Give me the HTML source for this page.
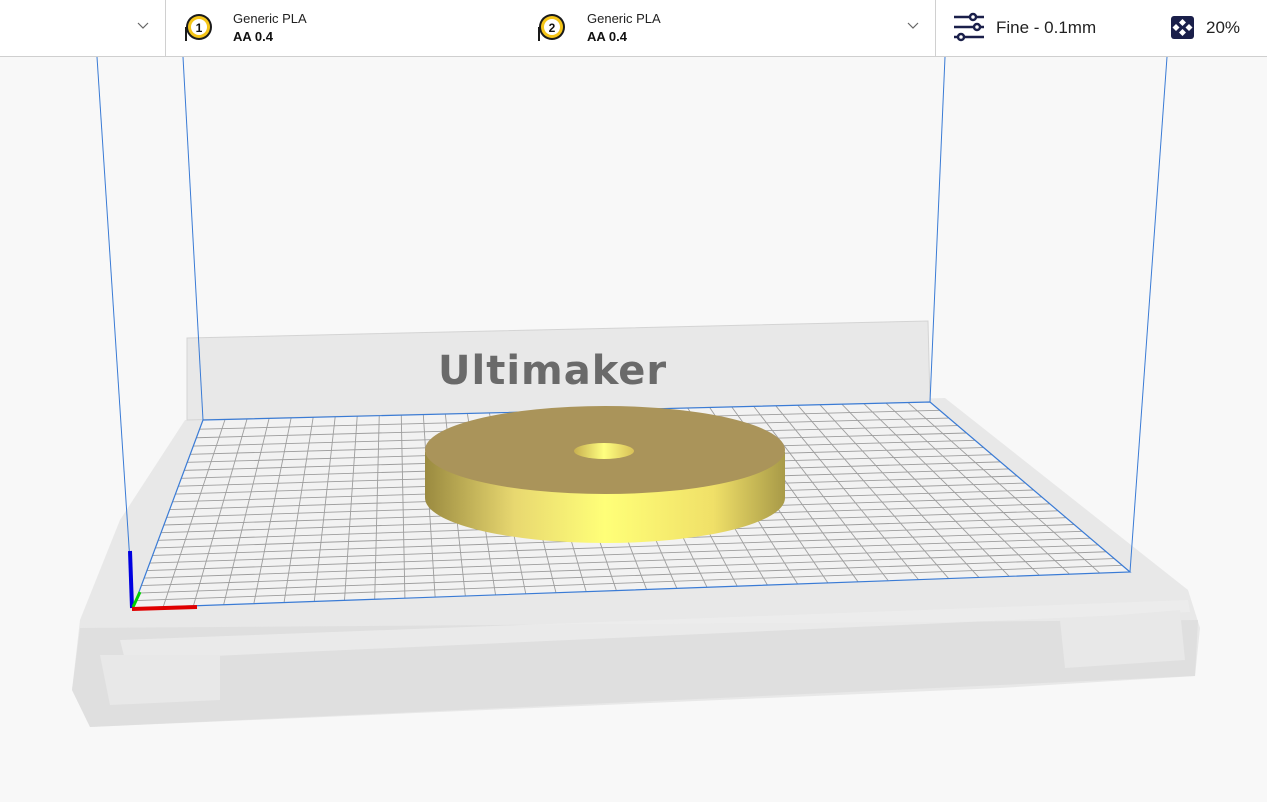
<!DOCTYPE html>
<html><head><meta charset="utf-8"><style>
html,body{margin:0;padding:0;width:1267px;height:802px;overflow:hidden;background:#f8f8f8;font-family:"Liberation Sans",sans-serif}
#top{position:absolute;left:0;top:0;width:1267px;height:56px;background:#fff;border-bottom:1px solid #cfcfcf;z-index:2}
.sep{position:absolute;top:0;width:1px;height:56px;background:#d0d0d0}
.t1{position:absolute;font-size:13px;color:#222}
.t2{position:absolute;font-size:13px;font-weight:bold;color:#111}
svg{position:absolute;left:0;top:0}
</style></head><body>
<svg width="1267" height="802" id="scene">
<polygon points="185,420 945,398 1188,590 1200,628 1195,676 1000,688 90,727 72,690 80,620 120,520" fill="#e4e4e4" opacity="0.8"/>
<polygon points="80,628 1198,620 1195,676 90,727 72,690" fill="#dcdcdc" opacity="0.7"/>
<polygon points="120,640 1188,600 1190,612 125,660" fill="#ececec" opacity="0.8"/>
<polygon points="100,655 220,655 220,700 110,705" fill="#e8e8e8"/>
<polygon points="1060,620 1180,610 1185,660 1065,668" fill="#e8e8e8"/>
<polygon points="187,338 928,321 930,402 187,420" fill="#e8e8e8" stroke="#d4d4d4"/>
<text x="438" y="384" font-family="DejaVu Sans, sans-serif" font-weight="bold" font-size="40" fill="#6a6a6a" letter-spacing="1">Ultimaker</text>
<polygon points="203,420 930,402 1130,572 133,608" fill="#f2f2f2"/>
<g id="grid" stroke="#666" stroke-width="0.9" opacity="0.6"></g>
<polygon points="203,420 930,402 1130,572 133,608" fill="none" stroke="#3a7bd5" stroke-width="1.2"/>
<g stroke="#3a7bd5" stroke-width="1">
<line x1="97" y1="57" x2="133" y2="608"/><line x1="183" y1="57" x2="203" y2="420"/>
<line x1="945" y1="57" x2="930" y2="402"/><line x1="1167" y1="57" x2="1130" y2="572"/>
</g>
<defs><linearGradient id="side" x1="0" x2="1">
<stop offset="0" stop-color="#9a8a40"/><stop offset="0.25" stop-color="#e8d870"/><stop offset="0.5" stop-color="#ffff78"/><stop offset="0.8" stop-color="#f0e068"/><stop offset="1" stop-color="#a89a48"/></linearGradient>
<linearGradient id="hole" x1="0" x2="1"><stop offset="0" stop-color="#c8b050"/><stop offset="0.5" stop-color="#ffff80"/><stop offset="1" stop-color="#d8c058"/></linearGradient></defs>
<path d="M425,452 L425,498 A180,45 0 0 0 785,498 L785,452 Z" fill="url(#side)"/>
<ellipse cx="605" cy="450" rx="180" ry="44" fill="#aa945a"/>
<ellipse cx="604" cy="451" rx="30" ry="8" fill="url(#hole)"/>
<line x1="130" y1="551" x2="132" y2="608" stroke="#0000e0" stroke-width="4"/>
<line x1="133" y1="607" x2="140" y2="592" stroke="#00d000" stroke-width="3"/>
<line x1="132" y1="609" x2="197" y2="607" stroke="#e00000" stroke-width="4"/>
</svg>
<div id="top">
<svg width="1267" height="56" style="position:absolute;left:0;top:0">
<polyline points="138,23 143,28 148,23" fill="none" stroke="#666" stroke-width="1.2"/>
<polyline points="908,23 913,28 918,23" fill="none" stroke="#666" stroke-width="1.2"/>
<g><circle cx="199" cy="27" r="13" fill="#1a1a1a"/><circle cx="199" cy="27" r="11" fill="#f5c518"/><circle cx="199" cy="27" r="8" fill="#fff"/><rect x="185" y="27" width="2" height="14" fill="#1a1a1a"/>
<text x="199" y="32" font-size="12" font-weight="bold" text-anchor="middle" fill="#111" font-family="Liberation Sans">1</text></g>
<g><circle cx="552" cy="27" r="13" fill="#1a1a1a"/><circle cx="552" cy="27" r="11" fill="#f5c518"/><circle cx="552" cy="27" r="8" fill="#fff"/><rect x="538" y="27" width="2" height="14" fill="#1a1a1a"/>
<text x="552" y="32" font-size="12" font-weight="bold" text-anchor="middle" fill="#111" font-family="Liberation Sans">2</text></g>
<g stroke="#1a1f4a" stroke-width="2.5" fill="#fff"><line x1="954" y1="17" x2="984" y2="17"/><line x1="954" y1="27" x2="984" y2="27"/><line x1="954" y1="37" x2="984" y2="37"/>
<circle cx="973" cy="17" r="3"/><circle cx="977" cy="27" r="3"/><circle cx="961" cy="37" r="3"/></g>
<rect x="1171" y="16" width="23" height="23" rx="3" fill="#1a1f4a"/>
<g fill="#fff"><polygon points="1182.5,19 1186,22.5 1182.5,26 1179,22.5"/><polygon points="1182.5,29 1186,32.5 1182.5,36 1179,32.5"/><polygon points="1176,24 1179.5,27.5 1176,31 1172.5,27.5"/><polygon points="1189,24 1192.5,27.5 1189,31 1185.5,27.5"/></g>
</svg>
<div class="sep" style="left:165px"></div><div class="sep" style="left:935px"></div>
<div class="t1" style="left:233px;top:11px">Generic PLA</div><div class="t2" style="left:233px;top:29px">AA 0.4</div>
<div class="t1" style="left:587px;top:11px">Generic PLA</div><div class="t2" style="left:587px;top:29px">AA 0.4</div>
<div class="t1" style="left:996px;top:18px;font-size:17px">Fine - 0.1mm</div>
<div class="t1" style="left:1206px;top:18px;font-size:17px">20%</div>
</div>
<script>
(function(){
var g=document.getElementById('grid'),ns='http://www.w3.org/2000/svg';
var A=[203,420],B=[930,402],C=[1130,572],D=[133,608];
function P(u,v){var tx=A[0]+(B[0]-A[0])*u, ty=A[1]+(B[1]-A[1])*u, bx=D[0]+(C[0]-D[0])*u, by=D[1]+(C[1]-D[1])*u;
 return [tx+(bx-tx)*v, ty+(by-ty)*v];}
function L(p,q){var l=document.createElementNS(ns,'line');l.setAttribute('x1',p[0]);l.setAttribute('y1',p[1]);l.setAttribute('x2',q[0]);l.setAttribute('y2',q[1]);g.appendChild(l);}
for(var i=1;i<33;i++){L(P(i/33,0),P(i/33,1));}
for(var j=1;j<24;j++){var v=Math.pow(j/24,0.95);L(P(0,v),P(1,v));}
})();
</script>
</body></html>
